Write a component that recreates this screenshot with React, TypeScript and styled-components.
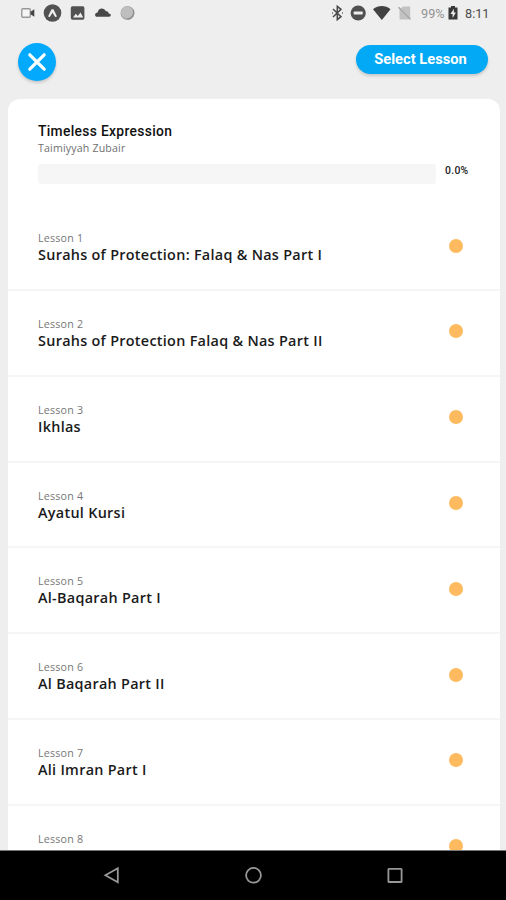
import React from "react";
import styled, { createGlobalStyle } from "styled-components";

const GlobalStyle = createGlobalStyle`
  * { box-sizing: border-box; }
  html, body { margin: 0; background: #eeeeee; overflow: hidden; }
`;

const Screen = styled.div`
  width: 506px;
  height: 900px;
  display: flex;
  flex-direction: column;
  background: #eeeeee;
  overflow: hidden;
  font-family: "Open Sans", "Noto Sans", sans-serif;
`;

const StatusBar = styled.div`
  height: 27px;
  flex: none;
  display: flex;
  justify-content: space-between;
  padding: 0 16px 0 19px;
`;

const StatusIcon = styled.svg`
  display: block;
  flex: none;
`;

const StatusGroup = styled.div`
  display: flex;
  align-items: center;
`;

const StatusText = styled.span<{ $color: string; $width: number; $gap?: number }>`
  font: 400 12.7px/27px Roboto, sans-serif;
  color: ${(p) => p.$color};
  width: ${(p) => p.$width}px;
  margin-left: ${(p) => p.$gap ?? 0}px;
  white-space: nowrap;
`;

const TopBar = styled.header`
  height: 72px;
  flex: none;
  display: flex;
  justify-content: space-between;
  align-items: flex-start;
  padding: 16px 18px 0;
`;

const CloseButton = styled.button`
  width: 38px;
  height: 38px;
  border: 0;
  padding: 0;
  border-radius: 50%;
  background: #03a9fc;
  box-shadow: 0 2px 3px rgba(0, 0, 0, 0.16);
  display: grid;
  place-items: center;
`;

const SelectButton = styled.button`
  width: 132px;
  height: 29px;
  margin-top: 1.5px;
  border: 0;
  padding: 0 3px 0 0;
  border-radius: 15px;
  background: #03a9f4;
  color: #fff;
  font: 700 14.7px/29px Roboto, sans-serif;
  box-shadow: 0 2px 3px rgba(0, 0, 0, 0.16);
`;

const Card = styled.main`
  flex: 1;
  min-height: 0;
  width: 492px;
  margin-left: 8px;
  overflow: hidden;
  background: #fff;
  border-radius: 12px 12px 0 0;
`;

const CourseHeader = styled.section`
  height: 106.2px;
  padding: 24px 31px 0 30px;
`;

const CourseTitle = styled.h1`
  margin: 0;
  font: 500 13.8px/16px Roboto, sans-serif;
  letter-spacing: 0.34px;
  color: #111;
`;

const Teacher = styled.div`
  font-size: 10.6px;
  line-height: 16px;
  letter-spacing: 0.18px;
  color: #707070;
  margin-top: 1px;
`;

const ProgressRow = styled.div`
  display: flex;
  align-items: flex-start;
  justify-content: space-between;
  margin-top: 8px;
`;

const ProgressTrack = styled.div`
  width: 398px;
  height: 20px;
  border-radius: 3px;
  background: #f6f6f6;
`;

const Percent = styled.span`
  width: 24px;
  font: 500 10.4px/14px Roboto, sans-serif;
  letter-spacing: 0.3px;
  color: #222;
  white-space: nowrap;
`;

const LessonRow = styled.article`
  height: 85.8px;
  padding: 25px 37px 0 30px;
  display: flex;
  justify-content: space-between;
  border-bottom: 2px solid #f6f6f6;
`;

const LessonLabel = styled.div`
  font-size: 10.7px;
  line-height: 16px;
  letter-spacing: 0.2px;
  color: #777;
`;

const LessonTitle = styled.h2`
  margin: 0;
  font-size: 14.4px;
  font-weight: 600;
  line-height: 18px;
  letter-spacing: 0.29px;
  color: #1b1b1b;
`;

const Dot = styled.span`
  width: 14px;
  height: 14px;
  margin-top: 8.4px;
  border-radius: 50%;
  background: #fdba5f;
`;

const NavBar = styled.nav`
  height: 50px;
  flex: none;
  background: #000;
  border-top: 1px solid #777;
`;

const lessons = [
  "Surahs of Protection: Falaq & Nas Part I",
  "Surahs of Protection Falaq & Nas Part II",
  "Ikhlas",
  "Ayatul Kursi",
  "Al-Baqarah Part I",
  "Al Baqarah Part II",
  "Ali Imran Part I",
  "Ali Imran Part II",
];

function Notifications() {
  return (
    <StatusIcon width="118" height="27" viewBox="19 0 118 27">
      <rect x="21.8" y="8.8" width="8.5" height="8.4" rx="1" fill="#f5f5f5" stroke="#999" strokeWidth="1.4" />
      <path d="M30.5 11.8 34.3 9.3v7.4l-3.8-2.5z" fill="#444" />
      <circle cx="52.5" cy="13" r="8.8" fill="#525252" />
      <path d="M48 16.6 51.5 9.2h2l3.5 7.4-1.8.4-2.7-4.2-2.7 4.2z" fill="#eee" />
      <rect x="70.8" y="6.3" width="13.6" height="13.4" rx="1.6" fill="#525252" />
      <path d="m73 17.5 2.8-3.7 2 2.2 2.7-3.6 2.7 5.1z" fill="#eee" />
      <path d="M97.5 16.8c-3.4 0-3.1-4.1.1-4.4.8-4.6 6.2-5.4 8.3-1.1 2-.3 2.6.9 2.8 2.3 2.8.1 2.8 3.2.3 3.2z" fill="#484848" />
      <circle cx="127.5" cy="13" r="7" fill="#a5a5a5" />
      <circle cx="127" cy="12.4" r="5.9" fill="#bebebe" />
      <path d="M133.5 9.8c1.4 4.8-1.5 8.8-6 9.3" fill="none" stroke="#8b8b8b" strokeWidth="1.1" />
    </StatusIcon>
  );
}

function SystemIcons() {
  return (
    <StatusIcon width="84" height="27" viewBox="330 0 84 27">
      <path d="m333 9 8 7.6-3.7 3V6.4l3.7 3L333 17M332 13h.8M342 13h.8" fill="none" stroke="#484848" strokeWidth="1.5" />
      <circle cx="358.2" cy="13" r="7.6" fill="#505050" />
      <rect x="353.7" y="11.6" width="9" height="3" rx=".7" fill="#eee" />
      <path d="M373 9.2c5.2-4.2 12.5-4.2 17.5 0L381.8 20z" fill="#424242" />
      <path d="M410.2 6.4V18L400.5 8.3l3-1.9z" fill="#c2c2c2" />
      <path d="M399.5 9 410 19.5h-10.5z" fill="#c2c2c2" />
      <path d="m398.5 7.3 12 12" stroke="#a0a0a0" strokeWidth="1.3" />
    </StatusIcon>
  );
}

export default function App() {
  return (
    <>
      <GlobalStyle />
      <Screen>
        <StatusBar>
          <Notifications />
          <StatusGroup>
            <SystemIcons />
            <StatusText $color="#929292" $width={23} $gap={7}>99%</StatusText>
            <StatusIcon width="19" height="27" viewBox="444 0 19 27">
              <path d="M451 6h4v1.6h2.5v12h-9v-12h2.5z" fill="#393939" />
              <path d="m454 8.8-3.6 5.3h2.2v4l3.3-5.6h-2.1z" fill="#eee" />
            </StatusIcon>
            <StatusText $color="#4b4b4b" $width={25} $gap={2}>8:11</StatusText>
          </StatusGroup>
        </StatusBar>
        <TopBar>
          <CloseButton aria-label="Close">
            <svg width="20" height="20" viewBox="0 0 20 20">
              <path d="m2.8 2.8 14.4 14.4M17.2 2.8 2.8 17.2" fill="none" stroke="#fff" strokeWidth="3.2" strokeLinecap="round" />
            </svg>
          </CloseButton>
          <SelectButton>Select Lesson</SelectButton>
        </TopBar>
        <Card>
          <CourseHeader>
            <CourseTitle>Timeless Expression</CourseTitle>
            <Teacher>Taimiyyah Zubair</Teacher>
            <ProgressRow>
              <ProgressTrack />
              <Percent>0.0%</Percent>
            </ProgressRow>
          </CourseHeader>
          {lessons.map((title, i) => (
            <LessonRow key={title}>
              <div>
                <LessonLabel>Lesson {i + 1}</LessonLabel>
                <LessonTitle>{title}</LessonTitle>
              </div>
              <Dot />
            </LessonRow>
          ))}
        </Card>
        <NavBar>
          <svg width="506" height="49" viewBox="0 851 506 49" fill="none" stroke="#979797" strokeWidth="1.8">
            <path d="M117.8 868.3v14l-12.4-7z" />
            <circle cx="253.5" cy="875.3" r="7.4" />
            <rect x="388.4" y="868.8" width="13.2" height="13.2" rx=".6" />
          </svg>
        </NavBar>
      </Screen>
    </>
  );
}
